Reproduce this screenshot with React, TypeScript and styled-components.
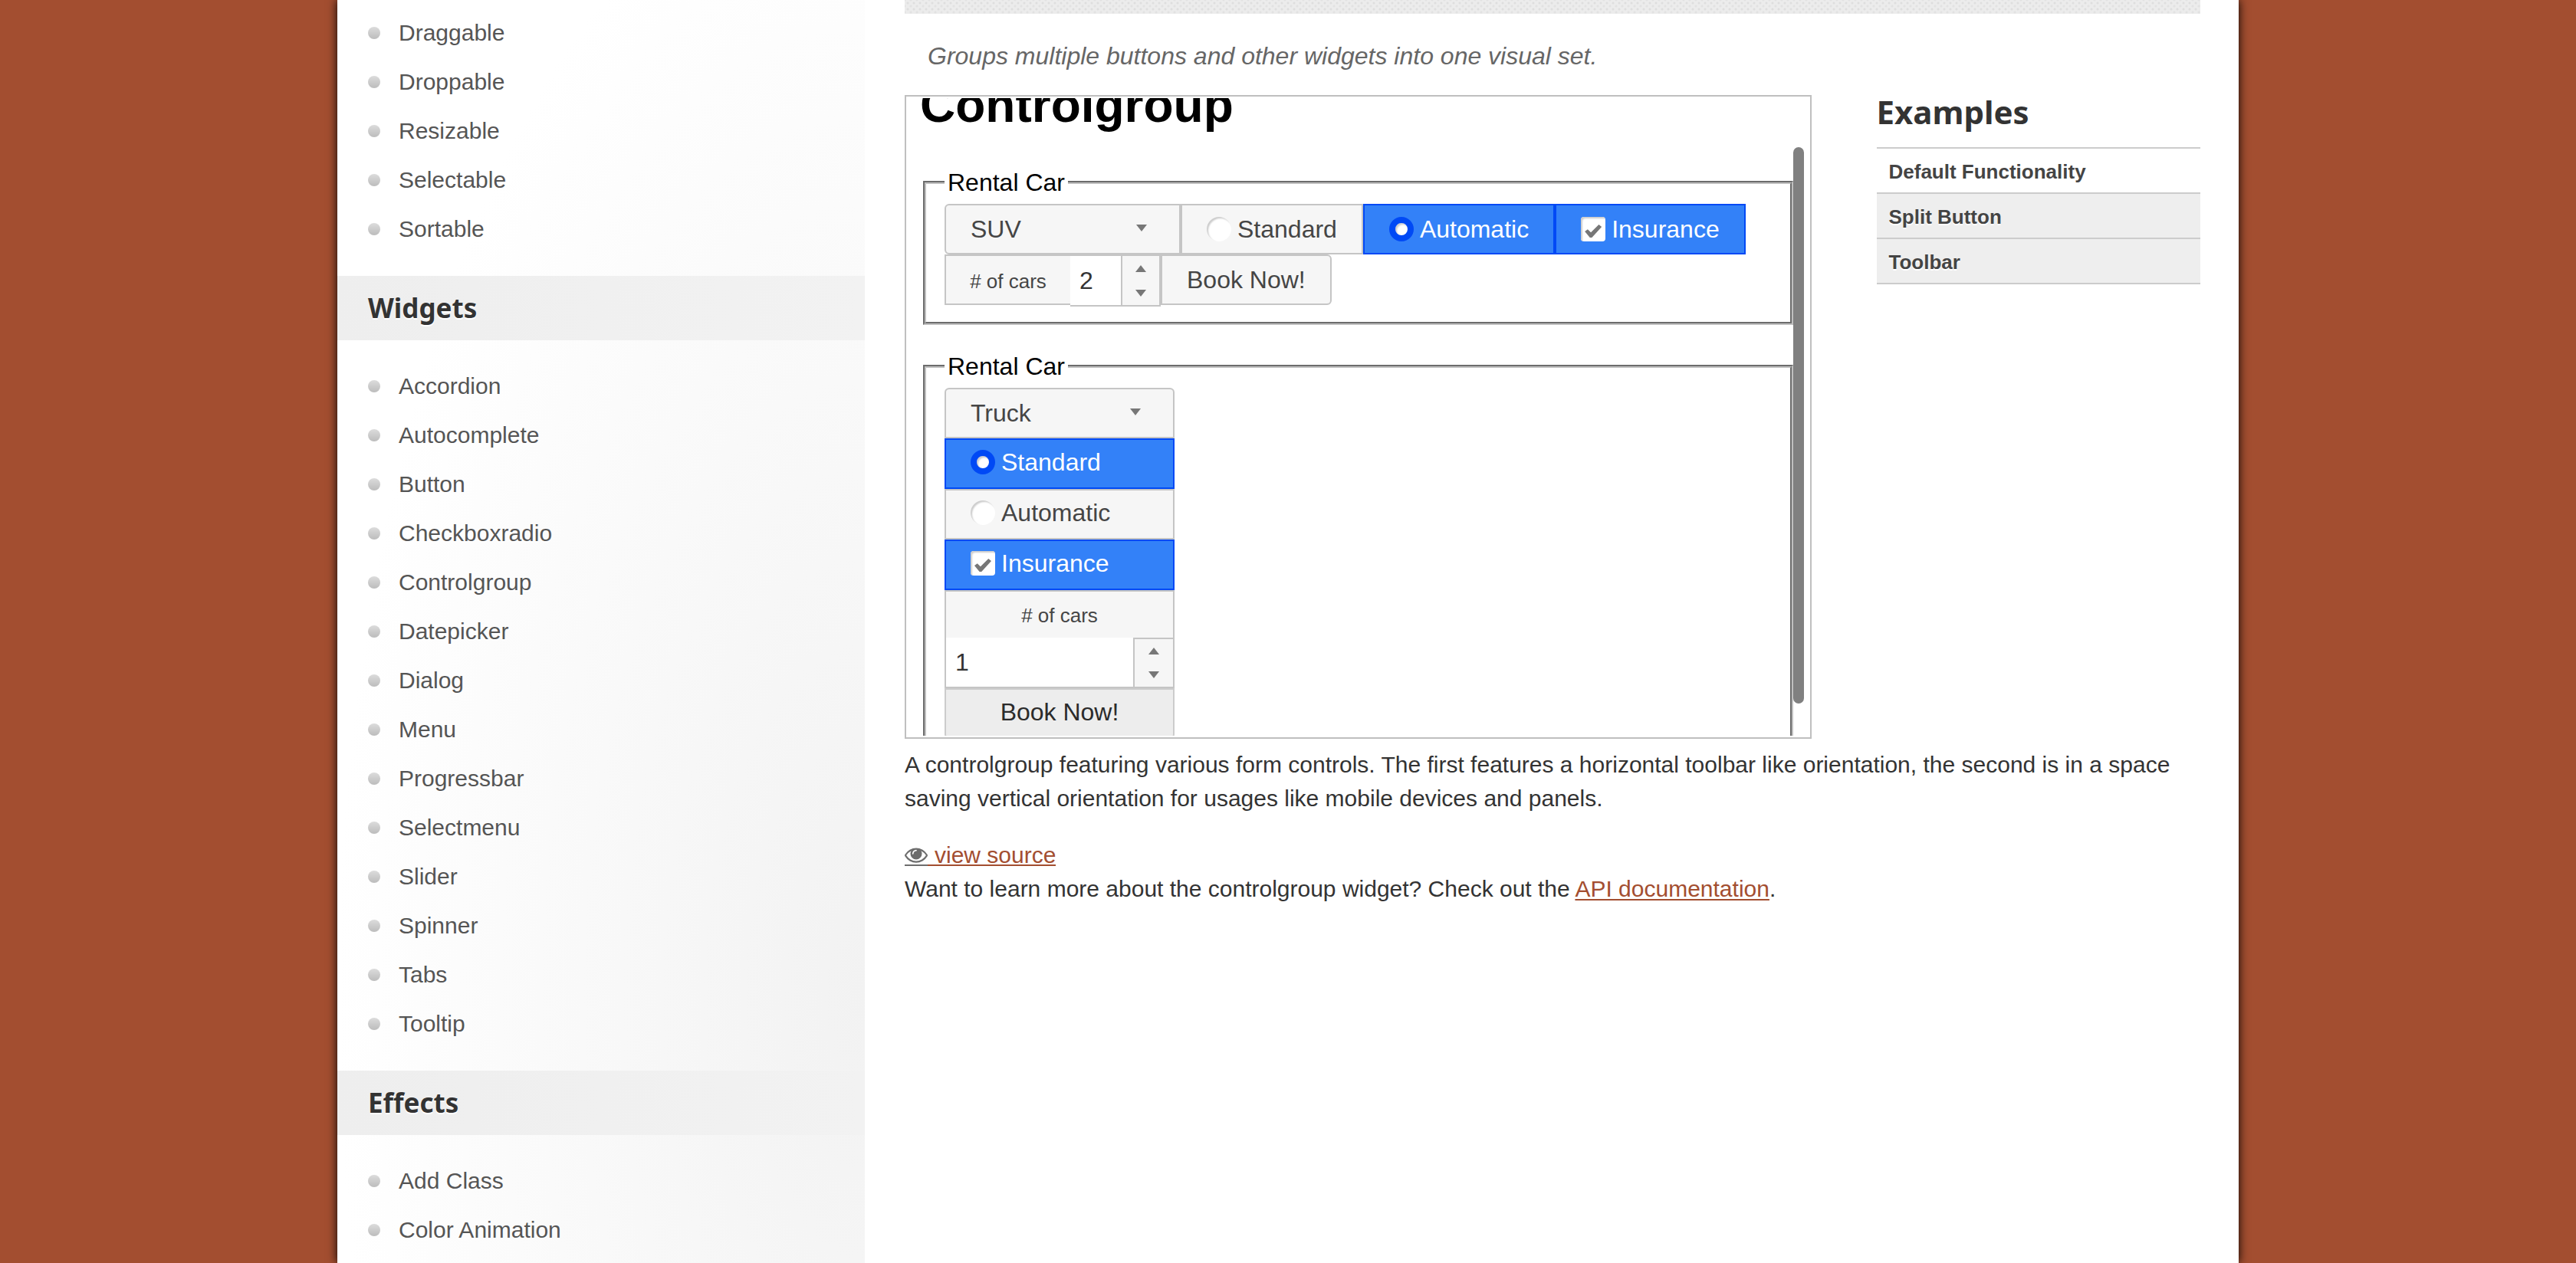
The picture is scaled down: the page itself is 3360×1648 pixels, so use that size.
import React from 'react';
import styled, { createGlobalStyle, css } from 'styled-components';

const sans = '"Liberation Sans", Arial, Helvetica, sans-serif';
const display = '"Noto Sans", "Open Sans", sans-serif';

const GlobalStyle = createGlobalStyle`
  *, *::before, *::after { box-sizing: border-box; }
  body {
    margin: 0;
    background: #a34e30;
    color: #333;
    font-family: ${sans};
    font-size: 30px;
    line-height: 44px;
  }
  #root { overflow: hidden; }
  button, input, select { font: inherit; margin: 0; }
`;

const Container = styled.div`
  display: flex;
  max-width: 2480px;
  height: 100vh;
  margin: 0 auto;
  background: #fff;
  box-shadow: 0 0 12px #000;
`;

/* Sidebar */
const Sidebar = styled.nav`
  flex: 0 0 688px;
  overflow: hidden;
  padding-top: 11px;
  background: radial-gradient(ellipse 100% 1500px at 100% 1300px, #f2f2f2, #fff);
`;

const SideHeading = styled.h3`
  margin: 0;
  padding: 0 40px;
  background: linear-gradient(to right, #eee, #f2f2f2);
  color: #333;
  font: 700 35px/84px ${display};
  text-shadow: 0 2px 0 #fff;
`;

const SideList = styled.ul<{ $first?: boolean }>`
  list-style: none;
  margin: 0;
  padding: ${(p) => (p.$first ? 0 : 28)}px 40px 29px;
`;

const SideItem = styled.li`
  display: flex;
  align-items: center;
  gap: 24px;
  height: 64px;

  &::before {
    content: '';
    width: 16px;
    height: 16px;
    border-radius: 50%;
    background: linear-gradient(#dcdcdc, #bcbcbc);
  }
`;

const SideLink = styled.a`
  color: #555;
  text-decoration: none;
  text-shadow: 0 2px 0 #fff;
`;

/* Main column */
const Main = styled.main`
  flex: 1;
  min-width: 0;
  padding: 0 50px 0 52px;
`;

const TitleStrip = styled.div`
  height: 18px;
  background-color: #ececec;
  background-image:
    radial-gradient(circle, #dedede 1px, transparent 2px),
    radial-gradient(circle, #e2e2e2 1px, transparent 2px);
  background-size: 8px 8px;
  background-position: 0 0, 4px 4px;
`;

const Description = styled.p`
  margin: 0;
  padding: 33px 30px 29px;
  color: #666;
  font-size: 32px;
  font-style: italic;
`;

const DemoRow = styled.div`
  display: grid;
  grid-template-columns: 70% 25%;
  justify-content: space-between;
  align-items: start;
`;

const DemoFrame = styled.section`
  position: relative;
  height: 840px;
  padding: 2px;
  border: 2px solid #bfbfbf;
  color: #000;
  font-size: 32px;
  line-height: 36px;
`;

const DemoViewport = styled.div`
  height: 100%;
  overflow: hidden;
  padding: 0 20px;
`;

const DemoTitle = styled.h1`
  margin: -27px 0 47px -4px;
  font-size: 64px;
  line-height: 72px;
`;

const ScrollThumb = styled.div`
  position: absolute;
  top: 66px;
  right: 8px;
  width: 14px;
  height: 726px;
  border-radius: 7px;
  background: #808080;
`;

const Fieldset = styled.fieldset`
  min-width: 0;
  margin: 0 0 36px;
  padding: 10px 24px 20px;
  border: 4px groove #c0c0c0;
`;

const Legend = styled.legend`
  padding: 0 4px;
`;

/* Controls */
const line = '2px solid #c5c5c5';

const Toolbar = styled.div`
  display: flex;
  flex-wrap: wrap;
  align-items: flex-start;
`;

const Stack = styled.div`
  display: flex;
  flex-direction: column;
  width: 300px;
`;

const SelectBox = styled.div<{ $stacked?: boolean }>`
  position: relative;
  width: ${(p) => (p.$stacked ? 300 : 308)}px;

  svg {
    position: absolute;
    top: 27px;
    right: 44px;
    pointer-events: none;
  }
`;

const Select = styled.select<{ $stacked?: boolean }>`
  appearance: none;
  display: block;
  width: 100%;
  height: 66px;
  padding: 0 32px;
  border: ${line};
  border-radius: ${(p) => (p.$stacked ? '6px 6px 0 0' : '6px 0 0 6px')};
  background: #f6f6f6;
  color: #454545;
  outline: none;
`;

const Choice = styled.label<{ $stacked?: boolean }>`
  display: flex;
  align-items: center;
  gap: 8px;
  padding: ${(p) => (p.$stacked ? '11px 32px 15px' : '13px 32px')};
  border: ${line};
  background: #f6f6f6;
  color: #454545;

  &:has(input:checked) {
    border-color: #0049f5;
    background: #3381f8;
    color: #fff;
  }
`;

const mark = css`
  appearance: none;
  flex: none;
  width: 32px;
  height: 32px;
  background: #fff;
  box-shadow: inset 2px 2px 2px #ccc;
`;

const Radio = styled.input`
  ${mark}
  border-radius: 50%;

  &:checked {
    border: 8px solid #0049f5;
  }
`;

const Checkbox = styled.input`
  ${mark}
  border-radius: 4px;

  &:checked::before {
    content: '';
    display: block;
    width: 22px;
    height: 18px;
    margin: 9px 0 0 5px;
    background: #777;
    clip-path: polygon(0 55%, 17% 40%, 36% 62%, 83% 6%, 100% 22%, 42% 100%, 30% 100%);
  }
`;

const CountLabel = styled.label<{ $stacked?: boolean }>`
  padding: 4px 0 0;
  border: ${line};
  background: #f6f6f6;
  color: #454545;
  font-size: 26px;
  text-align: center;
  ${(p) =>
    p.$stacked
      ? css`
          height: 62px;
          border-bottom: 0;
          line-height: 54px;
        `
      : css`
          width: 164px;
          height: 66px;
          border-right: 0;
          line-height: 58px;
        `}
`;

const Spinner = styled.div<{ $stacked?: boolean }>`
  display: flex;
  border: ${line};
  ${(p) =>
    p.$stacked
      ? css`
          height: 66px;
          border-top: 0;
        `
      : css`
          height: 68px;
          border-left: 0;
        `}
`;

const SpinnerInput = styled.input`
  flex: 1;
  min-width: 0;
  width: 66px;
  padding: 0 12px;
  border: 0;
  background: #fff;
  color: #333;
  outline: none;
`;

const SpinnerButtons = styled.div<{ $stacked?: boolean }>`
  display: flex;
  flex-direction: column;
  width: ${(p) => (p.$stacked ? 52 : 50)}px;
  border-left: ${line};
  border-top: ${(p) => (p.$stacked ? line : '0')};
`;

const SpinButton = styled.button`
  display: flex;
  flex: 1;
  align-items: center;
  justify-content: center;
  padding: 0;
  border: 0;
  background: #f6f6f6;
`;

const BookButton = styled.button<{ $stacked?: boolean }>`
  height: 66px;
  padding: 0 32px;
  border: ${line};
  border-radius: 0 6px 6px 0;
  background: #f6f6f6;
  color: #454545;
  ${(p) =>
    p.$stacked &&
    css`
      padding-bottom: 4px;
      border-color: #ccc;
      border-radius: 0 0 6px 6px;
      background: #ededed;
      color: #2b2b2b;
    `}
`;

/* Examples list */
const ExamplesTitle = styled.h2`
  margin: 0 0 24px;
  color: #333;
  font: 700 42px/44px ${display};
`;

const ExampleList = styled.ul`
  list-style: none;
  margin: 0;
  padding: 0;
  border-top: 2px solid #ccc;
`;

const ExampleLink = styled.a<{ $active?: boolean }>`
  display: block;
  padding: 4px 16px 0;
  border-bottom: 2px solid #ccc;
  background: ${(p) => (p.$active ? '#fff' : '#eee')};
  color: #444;
  font-size: 26px;
  font-weight: 700;
  line-height: 53px;
  text-decoration: none;
  text-shadow: 0 2px 0 #fff;
`;

const Copy = styled.p`
  margin: 12px 0 30px;
`;

const Link = styled.a`
  color: #a34e30;
  text-decoration: underline;
  text-decoration-thickness: 2px;
  text-underline-offset: 3px;
`;

const SourceLink = styled(Link)`
  display: flex;
  width: fit-content;
  height: 44px;
  text-decoration: none;
`;

const EyeSlot = styled.span`
  display: flex;
  align-items: center;
  width: 30px;
  height: 36px;
  padding-top: 8px;
  color: #6d6d6d;
  border-bottom: 2px solid #6d6d6d;
`;

const SourceText = styled.span`
  height: 36px;
  padding-left: 9px;
  border-bottom: 2px solid #a34e30;
`;

const Arrow = ({ up }: { up?: boolean }) => (
  <svg width="14" height="9" viewBox="0 0 14 9" aria-hidden="true">
    <path d={up ? 'M7 0 14 9H0Z' : 'M0 0H14L7 9Z'} fill="#777" />
  </svg>
);

const EyeIcon = () => (
  <svg width="30" height="30" viewBox="0 0 1792 1792" fill="currentColor" aria-hidden="true">
    <path d="M1664 960q-152-236-381-353 61 104 61 225 0 185-131.5 316.5t-316.5 131.5-316.5-131.5-131.5-316.5q0-121 61-225-229 117-381 353 133 205 333.5 326.5t434.5 121.5 434.5-121.5 333.5-326.5zm-720-384q0-20-14-34t-34-14q-125 0-214.5 89.5t-89.5 214.5q0 20 14 34t34 14 34-14 14-34q0-86 61-147t147-61q20 0 34-14t14-34zm848 384q0 34-20 69-140 230-376.5 368.5t-499.5 138.5-499.5-139-376.5-368q-20-35-20-69t20-69q140-229 376.5-368t499.5-139 499.5 139 376.5 368q20 35 20 69z" />
  </svg>
);

const interactions = ['Draggable', 'Droppable', 'Resizable', 'Selectable', 'Sortable'];
const widgets = [
  'Accordion', 'Autocomplete', 'Button', 'Checkboxradio', 'Controlgroup', 'Datepicker', 'Dialog',
  'Menu', 'Progressbar', 'Selectmenu', 'Slider', 'Spinner', 'Tabs', 'Tooltip',
];
const effects = ['Add Class', 'Color Animation'];
const examples = ['Default Functionality', 'Split Button', 'Toolbar'];

const Links = ({ items, first }: { items: string[]; first?: boolean }) => (
  <SideList $first={first}>
    {items.map((item) => (
      <SideItem key={item}>
        <SideLink href="#">{item}</SideLink>
      </SideItem>
    ))}
  </SideList>
);

type GroupProps = {
  id: string;
  stacked?: boolean;
  car: string;
  transmission: string;
  count: string;
};

const RentalGroup = ({ id, stacked, car, transmission, count }: GroupProps) => {
  const Layout = stacked ? Stack : Toolbar;
  return (
    <Fieldset>
      <Legend>Rental Car</Legend>
      <Layout>
        <SelectBox $stacked={stacked}>
          <Select $stacked={stacked} aria-label="Car type" defaultValue={car}>
            <option>Compact car</option>
            <option>Midsize car</option>
            <option>Full size car</option>
            <option>SUV</option>
            <option>Luxury</option>
            <option>Truck</option>
            <option>Van</option>
          </Select>
          <Arrow />
        </SelectBox>
        {['Standard', 'Automatic'].map((name) => (
          <Choice key={name} $stacked={stacked}>
            <Radio type="radio" name={`${id}-transmission`} defaultChecked={name === transmission} />
            {name}
          </Choice>
        ))}
        <Choice $stacked={stacked}>
          <Checkbox type="checkbox" defaultChecked />
          Insurance
        </Choice>
        <CountLabel htmlFor={`${id}-count`} $stacked={stacked}># of cars</CountLabel>
        <Spinner $stacked={stacked}>
          <SpinnerInput id={`${id}-count`} type="text" defaultValue={count} />
          <SpinnerButtons $stacked={stacked}>
            <SpinButton type="button" aria-label="Increase"><Arrow up /></SpinButton>
            <SpinButton type="button" aria-label="Decrease"><Arrow /></SpinButton>
          </SpinnerButtons>
        </Spinner>
        <BookButton type="button" $stacked={stacked}>Book Now!</BookButton>
      </Layout>
    </Fieldset>
  );
};

export default function App() {
  return (
    <>
      <GlobalStyle />
      <Container>
        <Sidebar>
          <Links items={interactions} first />
          <SideHeading>Widgets</SideHeading>
          <Links items={widgets} />
          <SideHeading>Effects</SideHeading>
          <Links items={effects} />
        </Sidebar>
        <Main>
          <TitleStrip />
          <Description>Groups multiple buttons and other widgets into one visual set.</Description>
          <DemoRow>
            <DemoFrame>
              <DemoViewport>
                <DemoTitle>Controlgroup</DemoTitle>
                <RentalGroup id="horizontal" car="SUV" transmission="Automatic" count="2" />
                <RentalGroup id="vertical" stacked car="Truck" transmission="Standard" count="1" />
              </DemoViewport>
              <ScrollThumb />
            </DemoFrame>
            <aside>
              <ExamplesTitle>Examples</ExamplesTitle>
              <ExampleList>
                {examples.map((name, index) => (
                  <li key={name}>
                    <ExampleLink href="#" $active={index === 0}>{name}</ExampleLink>
                  </li>
                ))}
              </ExampleList>
            </aside>
          </DemoRow>
          <Copy>
            A controlgroup featuring various form controls. The first features a horizontal toolbar like
            orientation, the second is in a space saving vertical orientation for usages like mobile
            devices and panels.
          </Copy>
          <SourceLink href="#">
            <EyeSlot><EyeIcon /></EyeSlot>
            <SourceText>view source</SourceText>
          </SourceLink>
          <div>
            Want to learn more about the controlgroup widget? Check out the{' '}
            <Link href="#">API documentation</Link>.
          </div>
        </Main>
      </Container>
    </>
  );
}
